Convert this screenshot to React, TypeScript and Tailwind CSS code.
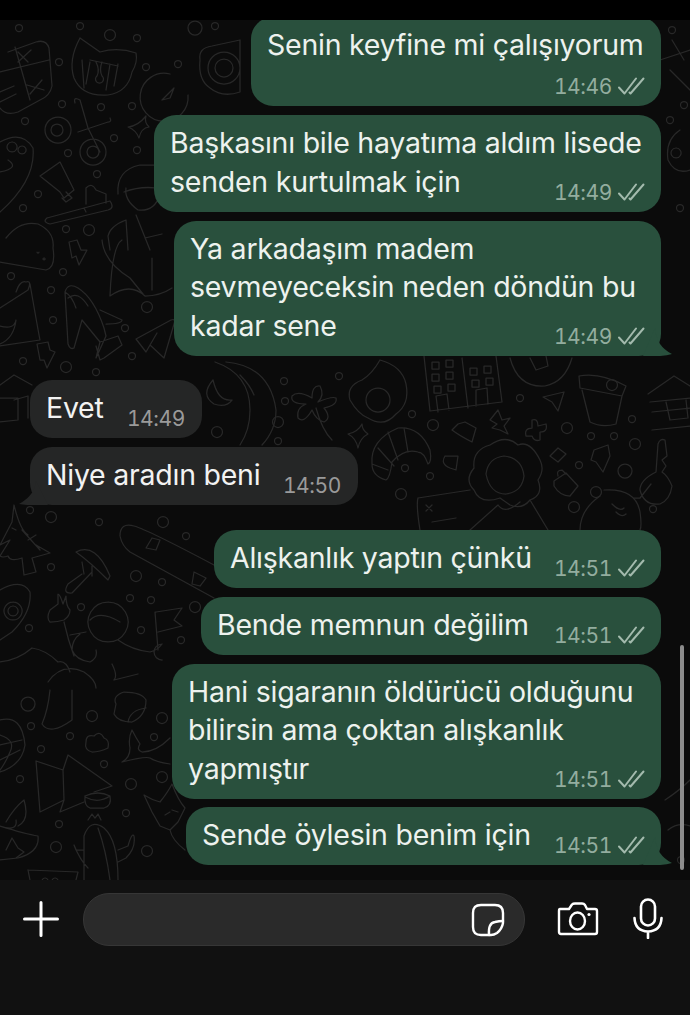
import type { ReactNode } from "react";

const dots: [number, number, number][] = [
  [19, 28, 3.5], [80, 26, 3.5], [110, 35, 5.5], [137, 38, 3.5], [195, 28, 7], [215, 26, 3.5], [59, 62, 3.5], [146, 67, 3.5],
  [178, 64, 3.5], [62, 104, 3.5], [101, 107, 3.5], [132, 106, 3.5], [25, 121, 3.5], [114, 138, 3.5], [68, 153, 3.5],
  [137, 150, 3.5], [97, 174, 3.5], [38, 194, 3.5], [23, 208, 3.5], [66, 229, 3.5], [89, 230, 5.5], [11, 276, 3.5],
  [63, 272, 3.5], [51, 290, 3.5], [147, 307, 5.5], [53, 320, 3.5], [125, 328, 3.5], [23, 361, 3.5],
  [66, 367, 5.5], [132, 356, 3.5], [96, 372, 3.5], [284, 381, 3.5], [339, 376, 3.5], [285, 401, 3.5], [278, 422, 5.5],
  [217, 432, 5.5], [278, 441, 3.5], [412, 414, 3.5], [433, 425, 5.5], [520, 398, 3.5], [612, 385, 5.5], [632, 419, 3.5],
  [567, 428, 5.5], [591, 436, 3.5], [614, 436, 3.5], [635, 444, 5.5], [405, 468, 3.5], [430, 476, 3.5], [579, 465, 3.5],
  [625, 471, 7], [596, 492, 5.5], [574, 507, 5.5], [653, 509, 3.5], [401, 494, 5.5], [30, 510, 3.5], [51, 517, 5.5],
  [99, 522, 3.5], [163, 522, 5.5], [186, 536, 3.5], [51, 567, 3.5], [136, 576, 5.5], [162, 582, 3.5], [130, 598, 3.5],
  [151, 600, 3.5], [195, 607, 5.5], [81, 607, 3.5], [29, 628, 3.5], [141, 630, 3.5], [181, 640, 3.5], [28, 704, 7],
  [92, 716, 5.5], [31, 726, 3.5], [70, 736, 3.5], [41, 749, 3.5], [104, 764, 3.5], [20, 779, 3.5], [131, 784, 5.5],
  [154, 737, 3.5], [162, 777, 5.5], [126, 813, 3.5], [59, 824, 3.5], [56, 847, 5.5], [147, 851, 5.5], [162, 718, 5.5],
  [672, 30, 3.5], [670, 120, 3.5], [684, 105, 3.5], [680, 208, 3.5], [681, 860, 3.5],
];

const paths = [
  // calculator
  "M8 52 L36 42 Q46 39 49 48 L52 86 Q50 96 40 100 L18 112 Q6 116 0 108 M15 47 L30 100 M0 72 L49 60 M18 62 L31 50 M18 52 L28 62 M27 85 L44 90 M30 94 L42 80 M0 102 L16 94 M0 92 L14 86",
  // cat mask
  "M80 38 L100 52 Q118 47 136 53 Q138 62 132 72 Q128 92 108 95 Q82 97 74 78 Q68 60 80 38 M82 60 L84 88 M90 62 L86 84 M96 62 Q100 70 97 76 A4 4 0 1 0 102 76 Q99 70 102 62 M110 64 L106 90 M118 64 L114 86 M90 60 L118 66",
  // gauge
  "M170 74 A24 24 0 1 0 188 95 M162 100 L174 88 L170 98 Z",
  // camera
  "M200 60 Q198 48 212 46 L240 40 L240 92 Q222 98 210 88 Q198 80 200 60 M224 68 m-16 0 a16 16 0 1 0 32 0 a16 16 0 1 0 -32 0 M224 68 m-9 0 a9 9 0 1 0 18 0 a9 9 0 1 0 -18 0",
  // scissors
  "M75 103 Q73 96 80 100 L88 128 L100 152 M110 118 Q112 122 108 122 L78 132 M57 130 m-12 0 a13 13 0 1 0 26 0 a13 13 0 1 0 -26 0 M57 130 m-6 0 a6 6 0 1 0 12 0 a6 6 0 1 0 -12 0 M93 152 m-13 0 a13 13 0 1 0 26 0 a13 13 0 1 0 -26 0 M93 152 m-6 0 a6 6 0 1 0 12 0 a6 6 0 1 0 -12 0",
  // star
  "M146 116 Q138 126 128 127 Q136 130 139 138 Q141 128 149 127 Q144 122 146 116",
  // paw
  "M0 142 Q22 130 33 148 Q36 180 0 212 M12 142 a5 5 0 1 0 .1 0 M22 146 a4 4 0 1 0 .1 0 M8 160 Q20 168 0 172",
  // tube + toothbrush
  "M40 176 L60 162 L74 190 L64 198 L60 192 Z M66 192 L72 198 L66 202 L62 198 M47 218 L110 201 Q115 208 108 210 L50 224 Q42 222 47 218 M84 208 L86 212 M86 204 L86 188 Q92 182 96 190 L106 194 L106 203",
  // person
  "M118 194 Q116 170 140 165 L158 165 M126 188 Q124 200 138 210 Q154 212 160 195 M124 192 Q140 186 156 188 M110 250 L108 236 Q110 226 126 220 L128 250 M136 215 L150 250 M145 238 L162 234",
  // burger top
  "M6 238 Q20 220 38 224 Q55 232 53 248 M0 262 L46 270 Q56 268 53 248 M38 252 m-1 0 a1 1 0 1 0 2 0 M44 258 a1 1 0 1 0 .1 0",
  // lightning
  "M69 242 L77 240 L81 250 L87 250 L79 265 L76 256 L72 258 Z M37 344 L48 342 L50 350 L55 352 L47 368 L44 360 L40 360 Z",
  // ship
  "M102 240 Q104 262 130 278 L143 294 M172 288 Q160 296 145 296 Q130 282 110 296 Q112 246 122 240 M152 258 L152 290",
  // bread / bag
  "M0 308 L28 290 Q32 280 26 282 Q20 280 16 292 M30 284 Q38 330 40 340 L0 346 M0 326 Q14 330 16 320 Q14 338 0 344",
  // rocket
  "M65 292 Q68 282 78 288 Q94 298 104 328 L106 336 L96 358 L100 342 L82 320 L74 348 Q70 350 68 344 Z M65 292 Q72 296 76 308 M68 298 Q78 290 88 306 M100 310 L122 320 Q122 324 106 324 M100 342 L118 336 L122 345 L104 358 L100 360 L96 346",
  // plane
  "M136 339 L171 320 Q176 318 174 324 L164 358 L150 345 L146 352 Z M157 333 L150 345",
  // house
  "M0 385 L14 375 L32 385 M0 398 L18 398 M18 398 L18 420 L0 422 M14 400 L28 396 L28 418",
  // moon + road
  "M213 380 Q200 395 214 404 Q226 408 232 400 Q218 402 213 380 M215 362 Q250 374 250 410 Q250 430 240 445 M226 362 Q270 366 276 410 Q276 430 262 445 M240 375 Q250 385 254 395",
  // flower
  "M320 386 Q325 395 318 402 Q332 396 336 398 Q338 405 324 408 Q332 418 324 422 Q316 420 312 410 Q304 424 298 418 Q296 408 306 404 Q290 404 292 396 Q298 390 312 398 Q312 385 320 386 M316 408 Q322 430 332 440",
  // egg
  "M380 360 Q402 366 406 384 Q410 404 396 414 Q384 428 368 418 Q358 414 350 400 Q346 386 362 380 Q372 374 380 360 M378 400 m-12 0 a12 12 0 1 0 24 0 a12 12 0 1 0 -24 0",
  // building
  "M424 356 L430 411 L502 402 L496 356 M462 358 L468 408 M438 412 L436 396 L447 394 L449 410 M476 406 L476 390 L487 388 L488 404 M432 362 h7 v7 h-7 z M446 360 h7 v7 h-7 z M432 374 h7 v7 h-7 z M446 372 h7 v7 h-7 z M434 386 h7 v7 h-7 z M448 384 h7 v7 h-7 z M470 368 h7 v7 h-7 z M484 366 h7 v7 h-7 z M472 380 h7 v7 h-7 z M486 378 h7 v7 h-7 z",
  // ball
  "M510 358 Q518 388 545 386 Q565 382 572 358 M530 358 L536 370 L548 366 L546 356",
  // small plane
  "M543 397 L564 392 L558 411 L552 402 Z",
  // pot
  "M579 376 Q600 372 626 386 L622 396 L580 388 Z M582 390 L590 422 Q602 428 616 424 L622 396",
  // cabin
  "M648 394 L674 376 L690 386 M650 402 L690 398 M652 412 L690 408 M652 430 L690 426 M666 402 L670 420 L688 418 L686 400",
  // star 2 & asterisk & plus
  "M362 424 Q358 432 348 434 Q356 438 358 448 Q360 438 368 434 Q362 430 362 424 M498 410 L502 420 L510 418 L504 426 L508 434 L500 430 L492 428 L497 424 L490 420 Z M532 420 Q538 418 538 426 L546 424 Q548 432 540 432 L540 440 Q534 442 532 436 L526 436 Q524 428 532 428 Z M465 422 L476 428 L472 442 Q460 436 452 430 L458 424 Z",
  // croissant
  "M372 464 Q370 440 398 428 Q420 426 430 450 Q432 462 428 464 Q424 452 418 452 Q404 448 392 462 Q390 478 386 480 Q372 476 372 464 M388 432 L398 460 M404 428 L408 452 M378 448 L394 466 M372 464 L388 470",
  // small square things
  "M445 456 L458 456 L456 470 L450 468 Q440 464 445 456 M550 456 L558 448 L566 454 L558 462 Z M594 450 L608 445 L610 456 L603 472 L596 462 L591 460 Z",
  // woman
  "M490 445 Q506 434 518 445 Q530 440 540 460 Q545 470 538 480 Q544 495 530 500 Q522 510 510 505 L500 498 Q480 505 474 490 Q464 480 474 468 Q472 450 490 445 M486 474 Q488 458 504 456 Q522 458 524 476 Q522 492 506 494 Q490 494 486 474 M530 500 L548 530 M470 530 L498 505 Q505 515 520 502",
  // notebook
  "M418 498 L470 490 M418 498 Q416 505 420 530 M426 505 l6 6 m0 -6 l-6 6 M432 522 L456 518",
  // lock
  "M554 481 L566 473 L578 486 L570 496 Q560 496 554 486 Z M558 476 Q556 470 562 470 L566 474",
  // key
  "M665 440 Q660 438 658 444 L656 472 Q640 480 640 490 Q644 506 660 504 Q670 500 672 486 Q668 476 662 472 L666 466 L662 460 L667 456 Z M651 484 L640 498 L634 498",
  // avocado right
  "M604 490 Q636 488 640 512 Q642 526 640 530 M580 530 Q580 510 600 496 M612 504 Q620 512 624 508 M616 512 Q622 518 626 514",
  // tree
  "M14 505 Q20 530 28 535 L22 530 L40 550 L36 545 L50 553 L32 558 L36 572 L24 575 L22 558 Q10 562 8 556 Q2 558 0 556 L10 540 L0 545 L12 522 Z M12 528 L16 530 M28 540 L36 535",
  // mushroom
  "M76 552 Q96 542 110 576 L108 580 Q90 562 76 552 Z M82 562 L84 574 M92 566 L92 576 M82 574 L68 584 Q62 594 72 593 L92 572",
  // snowboard
  "M120 536 Q120 522 134 526 Q148 530 214 565 M120 536 Q122 546 130 552 L214 598 M146 548 L156 550 L160 540 L152 538 Z M194 572 L206 578 L200 586 L192 584 Z",
  // avocado half
  "M0 590 Q22 578 30 592 Q32 612 12 632 L0 640 M13 602 a9 9 0 1 0 .1 0 M13 606 a5 5 0 1 0 .1 0",
  // astronaut
  "M50 610 Q46 618 50 622 Q58 622 64 620 Q70 616 70 610 Q66 606 66 596 L63 604 Q60 594 58 594 L58 604 Z M64 622 Q68 640 74 656 M70 635 L86 632 M108 602 a20 20 0 1 0 .1 0 M90 620 Q100 610 120 622 M118 640 Q132 650 150 652 Q158 650 162 644 M162 644 a8 8 0 1 0 .1 16 M80 634 Q72 640 72 650 Q76 660 90 662 Q98 658 96 650 M0 662 Q18 660 32 648 Q46 650 58 662 Q66 660 70 672 M48 682 Q62 662 84 672 Q96 680 96 688 M112 664 Q118 676 114 680 L138 674",
  // flag
  "M155 612 L158 650 M156 612 L182 608 L174 620 L182 626 L158 632",
  // foot
  "M50 690 Q48 710 42 724 Q50 736 72 720 L72 690",
  // globe
  "M0 720 Q22 714 25 745 Q22 765 0 772 M0 735 Q16 740 10 752 Q6 762 0 770 M0 745 L22 740 M0 760 L20 750",
  // cloud
  "M86 742 Q86 734 94 736 Q100 730 104 738 Q110 740 108 748 Q100 752 92 752 Q84 750 86 742",
  // whale
  "M122 762 Q130 758 130 748 Q128 738 132 730 Q136 738 140 744 Q136 750 142 752 Q156 752 170 738 M122 762 Q146 756 150 758 Q156 762 170 764",
  // tent
  "M36 761 L63 770 L68 755 L112 786 L94 792 M36 761 L40 812 L64 800 L63 770 M64 800 L60 812 L84 802",
  // bowl
  "M85 796 Q98 790 110 796 Q112 806 104 808 L90 808 Q84 806 85 796 M85 797 Q98 804 110 796",
  // candle
  "M6 822 Q14 808 24 800 Q30 820 18 826 M0 826 Q18 832 16 820 M0 826 Q26 834 38 836 Q40 852 18 858 L0 860 M6 850 L12 838 L18 848 L24 852 L16 858",
  // cactus
  "M88 820 L92 814 L95 818 L98 814 L101 820 M84 836 Q90 818 104 828 Q118 840 118 880 M84 836 L84 880 M98 828 Q106 850 110 880 M118 850 L128 846 Q132 832 134 836 Q136 848 126 858 L118 862 M84 850 L76 850 L74 845 Q80 860 88 868",
  // fox
  "M144 795 Q152 800 160 802 Q168 792 172 784 Q178 800 185 808 L178 822 L170 830 L160 826 L152 812 Z M165 815 L170 812 M172 810 L178 812 M170 830 Q172 840 185 850",
  // box
  "M28 870 L78 872 L76 880 M28 870 L30 880 M45 878 a3 3 0 1 0 .1 0 M55 878 a3 3 0 1 0 .1 0",
  // sticker
  "M116 704 Q112 696 124 692 Q142 692 146 700 Q146 716 132 722 Q118 722 114 714 Z M128 722 Q130 710 146 708",
  // right edge
  "M660 60 L690 50 M672 40 L684 60 M670 70 L690 90 M680 130 Q665 140 668 160 Q675 175 690 170 M676 148 a5 5 0 1 0 .1 0 M665 800 Q680 790 690 780 M668 830 Q678 822 690 826",
];

function Wallpaper() {
  return (
    <svg className="absolute inset-0 h-[860px] w-[690px]" viewBox="0 20 690 860" fill="none" stroke="#282828" strokeWidth="1.25" strokeLinecap="round" strokeLinejoin="round">
      {paths.map((d) => (
        <path key={d} d={d} />
      ))}
      {dots.map(([cx, cy, r]) => (
        <circle key={`${cx}-${cy}`} cx={cx} cy={cy} r={r} />
      ))}
    </svg>
  );
}

function Checks() {
  return (
    <svg width="27" height="18" viewBox="0 0 27 18" fill="none" stroke="#a3baad" strokeWidth="2" strokeLinecap="round" strokeLinejoin="round">
      <path d="M1 10.5 L6.5 16.5 L18 1.5" />
      <path d="M11.5 15.5 L12.5 16.5 L25.5 1.5" />
    </svg>
  );
}

type BubbleProps = {
  children: ReactNode;
  time: string;
  width: string;
  tail?: boolean;
  className?: string;
};

function Outgoing({ children, time, width, tail, className = "" }: BubbleProps) {
  return (
    <div className={`relative self-end rounded-[22px] bg-[#29503d] pb-[10.5px] pl-[16px] pt-[9px] text-[#edf2ee] ${width} ${className}`}>
      {children}
      <div className="absolute bottom-[10px] right-[16px] flex items-center gap-[6px] text-[21px] leading-[20px] tracking-[-0.4px] tabular-nums text-[#93ad9f]">
        <span className="relative top-[1px]">{time}</span>
        <Checks />
      </div>
      {tail ? (
        <svg className="absolute bottom-0 right-[-12px]" width="30" height="28" viewBox="0 0 30 28" fill="#29503d">
          <path d="M12 0 Q13 18 29 26 Q20 29 0 28 Z" />
        </svg>
      ) : null}
    </div>
  );
}

function Incoming({ children, time, width, tail, className = "" }: BubbleProps) {
  return (
    <div className={`relative ml-[30px] rounded-[22px] bg-[#252626] pb-[10.5px] pl-[16px] pt-[9px] text-[#f2f2f2] ${width} ${className}`}>
      {children}
      <div className="absolute bottom-[9px] right-[17px] text-[21px] leading-[20px] tracking-[-0.4px] tabular-nums text-[#9a9a9a]">{time}</div>
      {tail ? (
        <svg className="absolute bottom-0 left-[-12px]" width="30" height="24" viewBox="0 0 30 24" fill="#252626">
          <path d="M18 0 Q17 14 1 23 Q12 25 30 24 Z" />
        </svg>
      ) : null}
    </div>
  );
}

export default function App() {
  return (
    <div className="flex h-[1015px] w-[690px] flex-col overflow-hidden bg-black text-[28.5px] leading-[38.5px] tracking-[-0.24px]" style={{ fontFamily: "Inter, 'Noto Sans', sans-serif" }}>
      <div className="h-[20px] shrink-0 bg-black" />

      <div className="relative h-[860px] shrink-0 overflow-hidden bg-[#0b0b0b]">
        <Wallpaper />
        <div className="relative mt-[-3px] flex flex-col pr-[29px]">
          <Outgoing time="14:46" width="w-[410px]">
            Senin keyfine mi çalışıyorum
            <div className="h-[31px]" />
          </Outgoing>
          <Outgoing time="14:49" width="w-[507px]" className="mt-[9px]">
            Başkasını bile hayatıma aldım lisede<br />senden kurtulmak için
          </Outgoing>
          <Outgoing time="14:49" width="w-[487px]" tail className="mt-[9px]">
            Ya arkadaşım madem<br />sevmeyeceksin neden döndün bu<br />kadar sene
          </Outgoing>

          <Incoming time="14:49" width="w-[172px]" className="mt-[24px]">Evet</Incoming>
          <Incoming time="14:50" width="w-[328px]" tail className="mt-[9px]">Niye aradın beni</Incoming>

          <Outgoing time="14:51" width="w-[447px]" className="mt-[25px]">Alışkanlık yaptın çünkü</Outgoing>
          <Outgoing time="14:51" width="w-[460px]" className="mt-[9px]">Bende memnun değilim</Outgoing>
          <Outgoing time="14:51" width="w-[489px]" className="mt-[9px]">
            Hani sigaranın öldürücü olduğunu<br />bilirsin ama çoktan alışkanlık<br />yapmıştır
          </Outgoing>
          <Outgoing time="14:51" width="w-[475px]" tail className="mt-[8px]">Sende öylesin benim için</Outgoing>
        </div>
        {/* overlay scrollbar */}
        <div className="absolute right-[6px] top-[625px] h-[225px] w-[4px] rounded-full bg-[#8c8c8c]" />
      </div>

      <div className="flex flex-1 items-start bg-[#111111] pl-[23px] pt-[13px]">
        <svg className="mt-[8px] shrink-0" width="36" height="36" viewBox="0 0 36 36" fill="none" stroke="#fff" strokeWidth="3" strokeLinecap="round">
          <path d="M18 1.5 V34.5 M1.5 18 H34.5" />
        </svg>
        <div className="ml-[24px] flex h-[53px] w-[442px] items-center justify-end rounded-[26px] border border-[#363636] bg-[#2a2a2a] pr-[19px]">
          <svg width="34" height="34" viewBox="0 0 34 34" fill="none" stroke="#fff" strokeWidth="2.4" strokeLinecap="round" strokeLinejoin="round">
            <path d="M10 2 H24 Q32 2 32 10 V20 Q31 26 26 30 Q23 32 20 32 H10 Q2 32 2 24 V10 Q2 2 10 2 Z" />
            <path d="M18 32 Q17 20 24 19 Q28 18 32 18" />
          </svg>
        </div>
        <svg className="ml-[32px] mt-[9px] shrink-0" width="42" height="34" viewBox="0 0 42 34" fill="none" stroke="#fff" strokeWidth="2.4" strokeLinejoin="round">
          <path d="M3 7 H12 L15 2.5 Q16 1.5 18 1.5 H25 Q27 1.5 28 3 L30 7 H38 Q40 7 40 9 V30 Q40 32 38 32 H4 Q2 32 2 30 V9 Q2 7 3 7 Z" />
          <ellipse cx="20.5" cy="19" rx="7.5" ry="8.5" />
          <circle cx="32" cy="12.5" r="1.6" fill="#fff" stroke="none" />
        </svg>
        <svg className="ml-[34px] mt-[5px] shrink-0" width="30" height="41" viewBox="0 0 30 41" fill="none" stroke="#fff" strokeWidth="2.6" strokeLinecap="round">
          <rect x="8" y="1.5" width="14" height="26" rx="7" />
          <path d="M1.5 20 Q2 33 15 33.5 Q28 33 28.5 20 M15 33.5 V40" />
        </svg>
      </div>
    </div>
  );
}
